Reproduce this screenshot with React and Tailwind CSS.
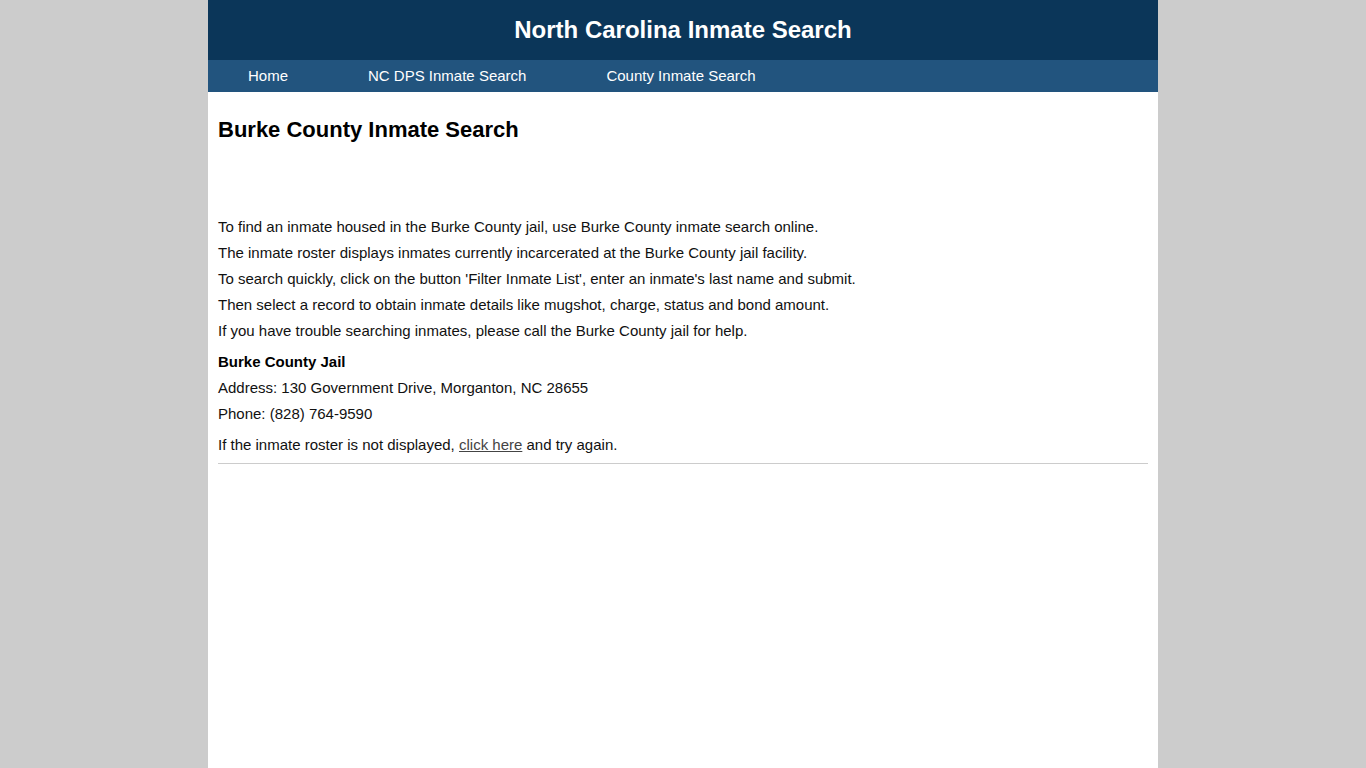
import React from "react";

const navLinks = ["Home", "NC DPS Inmate Search", "County Inmate Search"];

const intro = [
  "To find an inmate housed in the Burke County jail, use Burke County inmate search online.",
  "The inmate roster displays inmates currently incarcerated at the Burke County jail facility.",
  "To search quickly, click on the button 'Filter Inmate List', enter an inmate's last name and submit.",
  "Then select a record to obtain inmate details like mugshot, charge, status and bond amount.",
  "If you have trouble searching inmates, please call the Burke County jail for help.",
];

const App = () => {
  return (
    <div
      className="min-h-screen bg-[#cccccc]"
      style={{ fontFamily: "'Liberation Sans', Arial, sans-serif" }}
    >
      <div className="mx-auto w-[950px] min-h-screen bg-white">
        <header className="h-[60px] bg-[#0b3659] flex items-center justify-center">
          <h1 className="text-white text-[24px] font-bold">
            North Carolina Inmate Search
          </h1>
        </header>
        <nav className="h-[32px] bg-[#22547e] flex items-center">
          {navLinks.map((link) => (
            <a
              key={link}
              href="#"
              className="px-10 text-white text-[15px] leading-[32px]"
            >
              {link}
            </a>
          ))}
        </nav>

        <main className="px-[10px] text-[15px] text-[#111]">
          <h2 className="pt-[24px] text-[22px] font-bold leading-[28px] text-black">
            Burke County Inmate Search
          </h2>
          <div className="h-[70px]"></div>
          <div className="leading-[26px]">
            {intro.map((line) => (
              <p key={line}>{line}</p>
            ))}
          </div>
          <div className="mt-[5px] leading-[26px]">
            <p className="font-bold text-black">Burke County Jail</p>
            <p>Address: 130 Government Drive, Morganton, NC 28655</p>
            <p>Phone: (828) 764-9590</p>
          </div>
          <p className="mt-[5px] leading-[26px]">
            If the inmate roster is not displayed,{" "}
            <a href="#" className="underline text-[#444]">
              click here
            </a>{" "}
            and try again.
          </p>
          <hr className="mt-[5px] border-0 border-t border-[#cccccc]" />
        </main>
      </div>
    </div>
  );
};

export default App;
